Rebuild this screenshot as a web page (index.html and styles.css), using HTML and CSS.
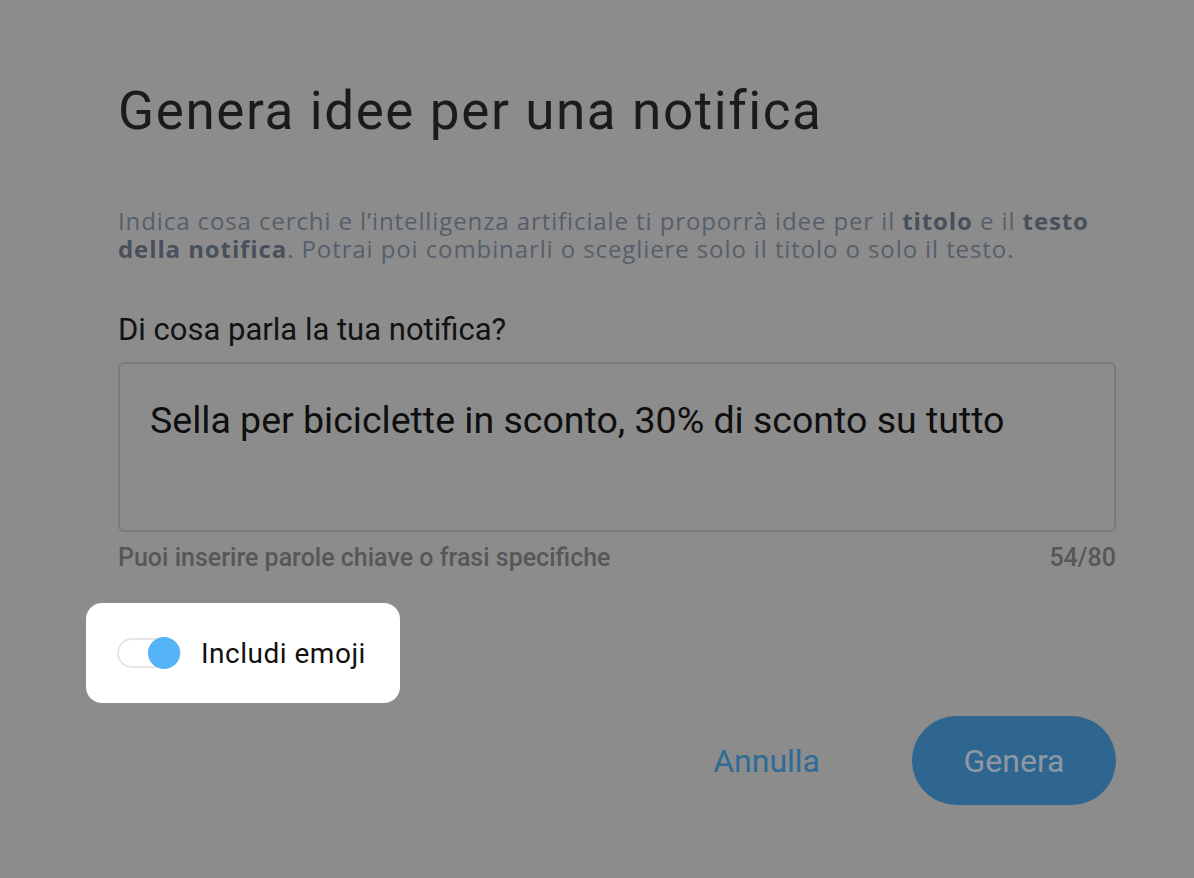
FILE: index.html
```html
<!DOCTYPE html>
<html lang="it">
<head>
<meta charset="utf-8">
<title>Genera idee per una notifica</title>
<link rel="stylesheet" href="styles.css">
</head>
<body>
<div class="dialog">
  <h1 class="title">Genera idee per una notifica</h1>
  <p class="desc">Indica cosa cerchi e l’intelligenza artificiale ti proporrà idee per il <b>titolo</b> e il <b>testo della notifica</b>. Potrai poi combinarli o scegliere solo il titolo o solo il testo.</p>
  <label class="label">Di cosa parla la tua notifica?</label>
  <div class="field">Sella per biciclette in sconto, 30% di sconto su tutto</div>
  <div class="helper"><span>Puoi inserire parole chiave o frasi specifiche</span><span>54/80</span></div>
  <div class="spot">
    <span class="toggle"><span class="knob"></span></span>
    <span class="toggle-label">Includi emoji</span>
  </div>
  <div class="actions">
    <button class="btn-text">Annulla</button>
    <button class="btn-primary">Genera</button>
  </div>
</div>
</body>
</html>
```
FILE: styles.css
```css
html, body {
  margin: 0;
  padding: 0;
  background: #8c8c8c;
  width: 1194px;
  height: 878px;
  overflow: hidden;
  font-family: Roboto, "Liberation Sans", sans-serif;
}
.dialog {
  padding: 79px 78px 0 118px;
  display: flex;
  flex-direction: column;
}
.title {
  margin: 0;
  font-weight: 400;
  font-size: 53px;
  line-height: 64px;
  letter-spacing: 1.6px;
  color: #1b1b1b;
}
.desc {
  margin: 64px 0 0;
  font-family: "Open Sans", Lato, sans-serif;
  font-size: 24px;
  line-height: 28px;
  color: #565f6a;
  letter-spacing: 0.9px;
}
.desc b {
  font-weight: 700;
  color: #47505b;
}
.label {
  margin-top: 49px;
  font-size: 31px;
  line-height: 36px;
  color: #121212;
}
.field {
  margin-top: 14px;
  border: 2px solid #7b7b7b;
  border-radius: 6px;
  padding: 34px 30px 0;
  font-size: 37.5px;
  line-height: 44px;
  box-sizing: border-box;
  height: 170px;
  color: #0e0e0e;
}
.helper {
  margin-top: 11px;
  display: flex;
  justify-content: space-between;
  font-size: 25px;
  line-height: 30px;
  font-weight: 500;
  color: #575757;
}
.spot {
  align-self: flex-start;
  margin: 30px 0 0 -32px;
  background: #ffffff;
  border-radius: 16px;
  width: 314px;
  height: 100px;
  box-sizing: border-box;
  padding-left: 31px;
  display: flex;
  align-items: center;
}
.toggle {
  width: 64px;
  height: 30px;
  box-sizing: border-box;
  border: 2px solid #e6e6e6;
  border-radius: 16px;
  display: flex;
  align-items: center;
  justify-content: flex-end;
}
.knob {
  width: 32px;
  height: 32px;
  border-radius: 50%;
  background: #55b4f8;
  margin-right: -1px;
}
.toggle-label {
  margin-left: 20px;
  font-size: 28px;
  color: #111;
  letter-spacing: 0.5px;
}
.actions {
  margin-top: 13px;
  display: flex;
  justify-content: flex-end;
  align-items: center;
  gap: 56px;
}
.btn-text, .btn-primary {
  font-family: Roboto, "Liberation Sans", sans-serif;
  font-size: 32px;
  border: none;
  padding: 0;
}
.btn-text {
  background: none;
  color: #2e6b97;
  padding: 0 36px;
  height: 89px;
}
.btn-primary {
  width: 204px;
  height: 89px;
  border-radius: 45px;
  background: #2f6690;
  color: #8d98a2;
}
```
